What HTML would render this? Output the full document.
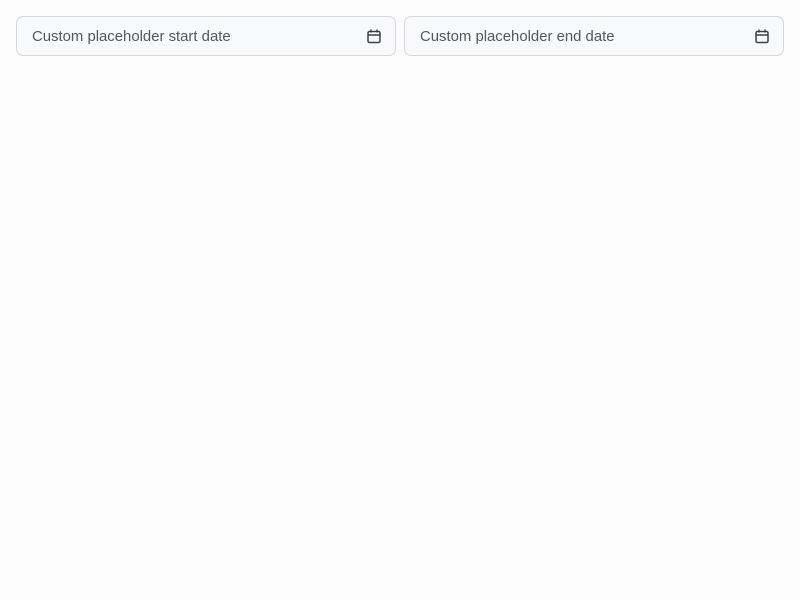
<!DOCTYPE html>
<html><head><style>
html,body{margin:0;padding:0;width:800px;height:600px;background:#fcfcfd;font-family:"Liberation Sans",sans-serif;}
.f{position:absolute;top:16px;width:378px;height:38px;border:1px solid #d6d6dc;border-radius:7px;background:#f8f9fb;}
.f span{position:absolute;left:15px;top:12px;font-size:14.9px;color:#55565c;}
.f svg{position:absolute;right:14px;top:12px;}
</style></head><body>
<div class="f" style="left:16px"><span>Custom placeholder start date</span>
<svg width="14" height="15" viewBox="0 0 14 15" fill="none" stroke="#3f3f46" stroke-width="1.5"><rect x="1" y="2.5" width="12" height="11" rx="1.5"/><line x1="1" y1="6" x2="13" y2="6"/><line x1="4" y1="0.5" x2="4" y2="3.5"/><line x1="10" y1="0.5" x2="10" y2="3.5"/></svg></div>
<div class="f" style="left:404px"><span>Custom placeholder end date</span>
<svg width="14" height="15" viewBox="0 0 14 15" fill="none" stroke="#3f3f46" stroke-width="1.5"><rect x="1" y="2.5" width="12" height="11" rx="1.5"/><line x1="1" y1="6" x2="13" y2="6"/><line x1="4" y1="0.5" x2="4" y2="3.5"/><line x1="10" y1="0.5" x2="10" y2="3.5"/></svg></div>
</body></html>
